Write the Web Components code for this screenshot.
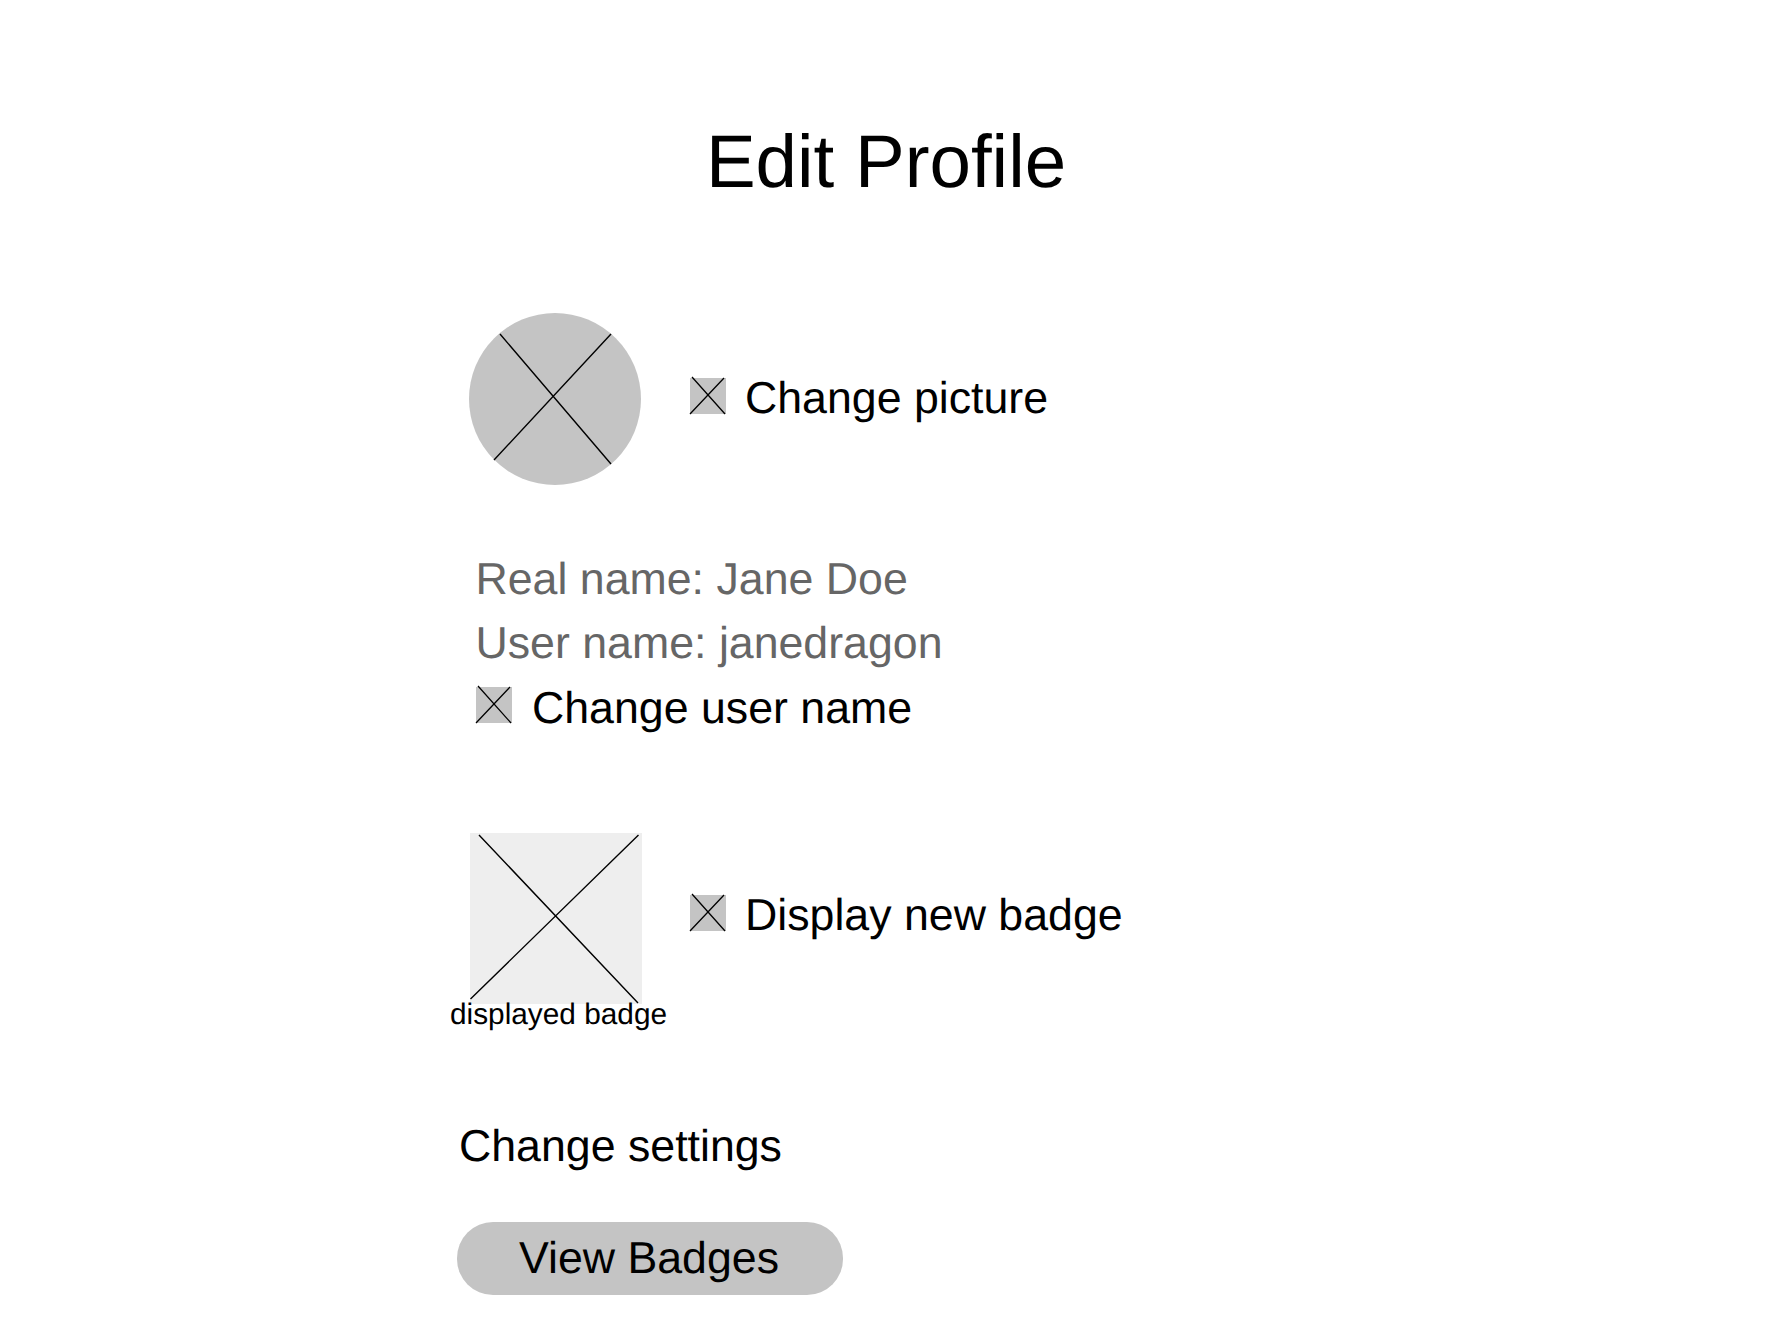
<!DOCTYPE html>
<html>
<head>
<meta charset="utf-8">
<style>
html, body { margin: 0; background: #fff; }
body { font-family: "Liberation Sans", Arial, sans-serif; text-rendering: geometricPrecision; }
</style>
</head>
<body>
<edit-profile></edit-profile>
<script>
class XBox extends HTMLElement {
    constructor() {
        super()
        this.attachShadow({mode: 'open'})
        this.shadowRoot.innerHTML = `
        <style>
            :host { display: block; flex: none; width: 36px; height: 36px; margin-bottom: var(--box-lift, 7px); }
            svg { display: block; overflow: visible; }
        </style>
        <svg width="36" height="36" viewBox="0 0 36 36"><rect width="36" height="36" fill="#c4c4c4"/><path d="M2 -1 L35 36 M34 0 L0 36" stroke="#000" stroke-width="1.3" fill="none"/></svg>
        `
    }
}
window.customElements.define('x-box', XBox)

class ActionRow extends HTMLElement {
    constructor() {
        super()
        this.attachShadow({mode: 'open'})
        this.shadowRoot.innerHTML = `
        <style>
            :host { display: flex; align-items: center; gap: var(--row-gap, 20px); font-size: 44.7px; line-height: 50px; color: #000; }
        </style>
        <x-box></x-box><span><slot></slot></span>
        `
    }
}
window.customElements.define('action-row', ActionRow)

class AvatarPicture extends HTMLElement {
    constructor() {
        super()
        this.attachShadow({mode: 'open'})
        this.shadowRoot.innerHTML = `
        <style>
            :host { display: block; flex: none; width: 172px; height: 172px; }
            svg { display: block; }
        </style>
        <svg width="172" height="172" viewBox="0 0 172 172"><circle cx="86" cy="86" r="86" fill="#c4c4c4"/><path d="M31 21 L142 151 M142 21 L25 147" stroke="#000" stroke-width="1.4" fill="none"/></svg>
        `
    }
}
window.customElements.define('avatar-picture', AvatarPicture)

class BadgeTile extends HTMLElement {
    constructor() {
        super()
        this.attachShadow({mode: 'open'})
        this.shadowRoot.innerHTML = `
        <style>
            :host { display: block; flex: none; width: 172px; height: 171px; position: relative; }
            svg { display: block; }
            span { position: absolute; left: -20px; top: 166px; font-size: 29.8px; line-height: 32px; white-space: nowrap; color: #000; }
        </style>
        <svg width="172" height="171" viewBox="0 0 172 171"><rect width="172" height="171" fill="#eee"/><path d="M9 2 L168 170 M168.5 2 L0.5 166" stroke="#000" stroke-width="1.4" fill="none"/></svg>
        <span><slot></slot></span>
        `
    }
}
window.customElements.define('badge-tile', BadgeTile)

class PillButton extends HTMLElement {
    constructor() {
        super()
        this.attachShadow({mode: 'open'})
        this.shadowRoot.innerHTML = `
        <style>
            :host { display: flex; align-items: center; justify-content: center; width: 386px; height: 73px; padding-right: 2px; border-radius: 36px; background: #c4c4c4; font-size: 44.7px; color: #000; box-sizing: border-box; }
        </style>
        <slot></slot>
        `
    }
}
window.customElements.define('pill-button', PillButton)

class EditProfile extends HTMLElement {
    constructor() {
        super()
        this.attachShadow({mode: 'open'})
        this.shadowRoot.innerHTML = `
        <style>
            :host { display: block; width: 1768px; height: 1334px; overflow: hidden; position: relative; }
            h1 { margin: 0; padding-top: 117px; text-align: center; font-weight: 400; font-size: 74.5px; line-height: 90px; width: 1772px; }
            .top { display: flex; align-items: center; gap: 49px; margin: 106px 0 0 469px; }
            .top action-row { --row-gap: 19px; }
            .info { margin: 63px 0 0 475.5px; font-size: 44.7px; line-height: 64px; color: #666; }
            .info action-row { height: 64px; box-sizing: border-box; padding-top: 2px; --box-lift: 9px; --row-gap: 20.5px; }
            .badge { display: flex; align-items: center; gap: 48px; margin: 93px 0 0 470px; }
            .badge action-row { margin-bottom: 6px; --row-gap: 19px; --box-lift: 5px; }
            .settings { margin: 118px 0 0 459px; font-size: 44.7px; line-height: 50px; }
            pill-button { margin: 50px 0 0 457px; }
        </style>
        <h1>Edit Profile</h1>
        <div class="top"><avatar-picture></avatar-picture><action-row>Change picture</action-row></div>
        <div class="info">
            <div>Real name: Jane Doe</div>
            <div>User name: janedragon</div>
            <action-row>Change user name</action-row>
        </div>
        <div class="badge"><badge-tile>displayed badge</badge-tile><action-row>Display new badge</action-row></div>
        <div class="settings">Change settings</div>
        <pill-button>View Badges</pill-button>
        `
    }
}
window.customElements.define('edit-profile', EditProfile)
</script>
</body>
</html>
